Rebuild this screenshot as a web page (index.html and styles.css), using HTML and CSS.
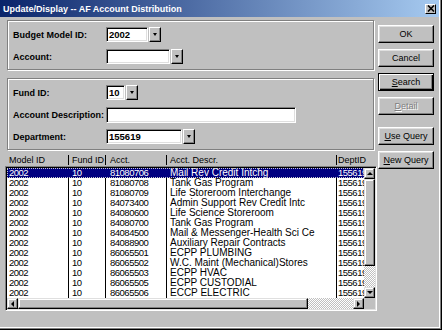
FILE: index.html
```html
<!DOCTYPE html>
<html>
<head>
<meta charset="utf-8">
<title>Update/Display -- AF Account Distribution</title>
<link rel="stylesheet" href="styles.css">
</head>
<body>
<div class="window">
  <div class="titlebar">
    <span class="title">Update/Display -- AF Account Distribution</span>
    <span class="close"><svg width="8" height="7" viewBox="0 0 8 7"><path d="M1 0.5 L7 6.5 M7 0.5 L1 6.5" stroke="#000" stroke-width="1.6"/></svg></span>
  </div>
  <div class="content">
    <div class="left">
      <div class="group">
        <div class="frow">
          <span class="lbl">Budget Model ID:</span>
          <span class="field w-budget">2002</span><span class="dd"><i></i></span>
        </div>
        <div class="frow">
          <span class="lbl">Account:</span>
          <span class="field w-account"></span><span class="dd"><i></i></span>
        </div>
      </div>
      <div class="group g2">
        <div class="frow">
          <span class="lbl">Fund ID:</span>
          <span class="field w-fund">10</span><span class="dd"><i></i></span>
        </div>
        <div class="frow">
          <span class="lbl">Account Description:</span>
          <span class="field w-desc"></span>
        </div>
        <div class="frow">
          <span class="lbl">Department:</span>
          <span class="field w-dept">155619</span><span class="dd"><i></i></span>
        </div>
      </div>
      <div class="list">
        <div class="lhead">
          <span class="c c1">Model ID</span><span class="c c2">Fund ID</span><span class="c c3">Acct.</span><span class="c c4">Acct. Descr.</span><span class="c c5">DeptID</span>
        </div>
        <div class="lbox">
          <div class="rows">
            <div class="r sel"><span class="c c1">2002</span><span class="c c2">10</span><span class="c c3">81080706</span><span class="c c4">Mail Rev Credit Intchg</span><span class="c c5">155619</span></div>
            <div class="r"><span class="c c1">2002</span><span class="c c2">10</span><span class="c c3">81080708</span><span class="c c4">Tank Gas Program</span><span class="c c5">155619</span></div>
            <div class="r"><span class="c c1">2002</span><span class="c c2">10</span><span class="c c3">81080709</span><span class="c c4">Life Storeroom Interchange</span><span class="c c5">155619</span></div>
            <div class="r"><span class="c c1">2002</span><span class="c c2">10</span><span class="c c3">84073400</span><span class="c c4">Admin Support Rev Credit Intc</span><span class="c c5">155619</span></div>
            <div class="r"><span class="c c1">2002</span><span class="c c2">10</span><span class="c c3">84080600</span><span class="c c4">Life Science Storeroom</span><span class="c c5">155619</span></div>
            <div class="r"><span class="c c1">2002</span><span class="c c2">10</span><span class="c c3">84080700</span><span class="c c4">Tank Gas Program</span><span class="c c5">155619</span></div>
            <div class="r"><span class="c c1">2002</span><span class="c c2">10</span><span class="c c3">84084500</span><span class="c c4">Mail &amp; Messenger-Health Sci Ce</span><span class="c c5">155619</span></div>
            <div class="r"><span class="c c1">2002</span><span class="c c2">10</span><span class="c c3">84088900</span><span class="c c4">Auxiliary Repair Contracts</span><span class="c c5">155619</span></div>
            <div class="r"><span class="c c1">2002</span><span class="c c2">10</span><span class="c c3">86065501</span><span class="c c4">ECPP PLUMBING</span><span class="c c5">155619</span></div>
            <div class="r"><span class="c c1">2002</span><span class="c c2">10</span><span class="c c3">86065502</span><span class="c c4">W.C. Maint (Mechanical)Stores</span><span class="c c5">155619</span></div>
            <div class="r"><span class="c c1">2002</span><span class="c c2">10</span><span class="c c3">86065503</span><span class="c c4">ECPP HVAC</span><span class="c c5">155619</span></div>
            <div class="r"><span class="c c1">2002</span><span class="c c2">10</span><span class="c c3">86065505</span><span class="c c4">ECPP CUSTODIAL</span><span class="c c5">155619</span></div>
            <div class="r"><span class="c c1">2002</span><span class="c c2">10</span><span class="c c3">86065506</span><span class="c c4">ECCP ELECTRIC</span><span class="c c5">155619</span></div>
          </div>
          <div class="vscroll">
            <span class="sbtn"><i class="up"></i></span>
            <span class="vthumb"></span>
            <span class="vtrack"></span>
            <span class="sbtn"><i class="down"></i></span>
          </div>
          <div class="hscroll">
            <span class="sbtn"><i class="lt"></i></span>
            <span class="hthumb"></span>
            <span class="htrack"></span>
            <span class="sbtn"><i class="rt"></i></span>
          </div>
          <div class="corner"></div>
        </div>
      </div>
    </div>
    <div class="right">
      <span class="btn">OK</span>
      <span class="btn">Cancel</span>
      <span class="btn default"><u>S</u>earch</span>
      <span class="btn disabled"><u>D</u>etail</span>
      <span class="btn gap"><u>U</u>se Query</span>
      <span class="btn"><u>N</u>ew Query</span>
    </div>
  </div>
</div>
</body>
</html>
```
FILE: styles.css
```css
html, body {
  margin: 0;
  padding: 0;
  background: #c0c0c0;
}
body {
  font-family: "Liberation Sans", Arial, sans-serif;
}
.window {
  width: 442px;
  height: 330px;
  box-sizing: border-box;
  background: #c0c0c0;
  border-right: 1px solid #000;
  border-bottom: 1px solid #000;
  box-shadow: inset -1px -1px 0 #808080, inset -2px -2px 0 #fff;
  display: flex;
  flex-direction: column;
}
.titlebar {
  height: 17px;
  margin-right: 2px;
  background: linear-gradient(to right, #0a246a, #a6caf0);
  display: flex;
  align-items: center;
  justify-content: space-between;
  padding: 0 3px 0 3px;
}
.title {
  color: #fff;
  font-weight: bold;
  font-size: 9px;
  line-height: 10px;
}
.close {
  width: 11px;
  height: 10px;
  box-sizing: border-box;
  background: #c0c0c0;
  border: 1px solid;
  border-color: #fff #000 #000 #fff;
  display: flex;
  align-items: center;
  justify-content: center;
}
.close svg { display: block; }
.content {
  display: flex;
  padding: 3px 0 0 5px;
}
.left {
  width: 372px;
  display: flex;
  flex-direction: column;
}
.group {
  margin: 0 3px 0 2px;
  border: 1px solid #808080;
  box-shadow: inset 1px 1px 0 #fff, 1px 1px 0 #fff;
  padding: 6px 0 5px 5px;
  display: flex;
  flex-direction: column;
  gap: 7px;
}
.g2 { margin-top: 8px; }
.frow {
  display: flex;
  align-items: center;
  height: 15px;
}
.lbl {
  width: 93px;
  font-weight: bold;
  font-size: 9px;
  color: #000;
}
.field {
  height: 15px;
  box-sizing: border-box;
  background: #fff;
  border: 1px solid;
  border-color: #808080 #fff #fff #808080;
  box-shadow: inset 1px 1px 0 #000, inset -1px -1px 0 #dfdfdf;
  font-weight: bold;
  font-size: 9.5px;
  line-height: 13px;
  padding-left: 2px;
  color: #000;
}
.w-budget { width: 42px; }
.w-account { width: 64px; }
.w-fund { width: 19px; }
.w-desc { width: 190px; height: 16px; }
.w-dept { width: 76px; }
.dd {
  width: 12px;
  height: 15px;
  margin-left: 1px;
  box-sizing: border-box;
  background: #c0c0c0;
  border: 1px solid;
  border-color: #fff #000 #000 #fff;
  box-shadow: inset -1px -1px 0 #808080;
  display: flex;
  align-items: center;
  justify-content: center;
}
.dd i, .sbtn i {
  display: block;
  width: 0;
  height: 0;
}
.dd i {
  border-left: 2px solid transparent;
  border-right: 2px solid transparent;
  border-top: 3px solid #000;
}
.list {
  margin-top: 5px;
  font-family: "Liberation Sans", Arial, sans-serif;
  font-size: 10px;
  color: #000;
}
.lhead {
  display: flex;
  height: 10px;
  line-height: 10px;
  padding-left: 2px;
  margin-bottom: 1px;
  font-size: 9px;
}
.c {
  display: block;
  box-sizing: border-box;
  white-space: nowrap;
  overflow: hidden;
  padding-left: 3px;
  height: 10px;
  line-height: 10px;
}
.lhead .c { overflow: visible; }
.c1 { width: 61px; padding-left: 2px; }
.c2 { width: 37px; border-left: 1px solid #000; }
.c3 { width: 61px; border-left: 1px solid #000; padding-left: 4px; }
.c4 { width: 170px; border-left: 1px solid #000; }
.c5 { width: 28px; border-left: 1px solid #000; padding-left: 1px; }
.r .c1, .r .c2, .r .c3, .r .c5 {
  font-size: 9.5px;
  letter-spacing: -0.5px;
}
.lbox {
  display: grid;
  grid-template-columns: 357px 11px;
  grid-template-rows: 130px 11px;
  border: 1px solid;
  border-color: #808080 #fff #fff #808080;
  box-shadow: inset 1px 1px 0 #000, inset -1px -1px 0 #dfdfdf;
  padding: 1px;
  width: 372px;
  box-sizing: border-box;
}
.rows {
  background: #fff;
  overflow: hidden;
}
.r {
  display: flex;
  height: 10px;
}
.r.sel {
  background: #000080;
  color: #fff;
  outline: 1px dotted #c8c8c8;
  outline-offset: -1px;
}
.r.sel .c { border-left-color: #000080; }
.sbtn {
  display: flex;
  align-items: center;
  justify-content: center;
  width: 11px;
  height: 11px;
  box-sizing: border-box;
  background: #c0c0c0;
  border: 1px solid;
  border-color: #dfdfdf #000 #000 #dfdfdf;
  box-shadow: inset -1px -1px 0 #808080, inset 1px 1px 0 #fff;
  flex: none;
}
.up {
  border-left: 3px solid transparent;
  border-right: 3px solid transparent;
  border-bottom: 3px solid #000;
}
.down {
  border-left: 3px solid transparent;
  border-right: 3px solid transparent;
  border-top: 3px solid #000;
}
.lt {
  border-top: 3px solid transparent;
  border-bottom: 3px solid transparent;
  border-right: 3px solid #000;
}
.rt {
  border-top: 3px solid transparent;
  border-bottom: 3px solid transparent;
  border-left: 3px solid #000;
}
.vscroll {
  display: flex;
  flex-direction: column;
}
.vthumb, .hthumb {
  display: block;
  box-sizing: border-box;
  background: #c0c0c0;
  border: 1px solid;
  border-color: #dfdfdf #000 #000 #dfdfdf;
  box-shadow: inset -1px -1px 0 #808080, inset 1px 1px 0 #fff;
}
.vthumb { height: 87px; }
.vtrack, .htrack {
  display: block;
  flex: 1;
  background-color: #e4e4e4;
  background-image: repeating-conic-gradient(#c0c0c0 0 25%, #ffffff 0 50%);
  background-size: 2px 2px;
}
.hscroll {
  display: flex;
}
.hthumb { width: 290px; }
.corner { background: #c0c0c0; }
.right {
  width: 56px;
  margin-left: 1px;
  padding-top: 5px;
  display: flex;
  flex-direction: column;
  gap: 6px;
}
.btn {
  display: flex;
  align-items: center;
  justify-content: center;
  height: 18px;
  box-sizing: border-box;
  background: #c0c0c0;
  border: 1px solid;
  border-color: #fff #000 #000 #fff;
  box-shadow: inset -1px -1px 0 #808080, inset 1px 1px 0 #dfdfdf;
  font-family: "Liberation Sans", Arial, sans-serif;
  font-size: 9px;
  color: #000;
}
.btn.default {
  border: 1px solid #000;
  box-shadow: inset 1px 1px 0 #fff, inset -1px -1px 0 #000, inset -2px -2px 0 #808080;
}
.btn.disabled {
  color: #808080;
  text-shadow: 1px 1px 0 #fff;
}
.btn.gap { margin-top: 6px; }
u { text-decoration: underline; text-underline-offset: 1px; }
```
